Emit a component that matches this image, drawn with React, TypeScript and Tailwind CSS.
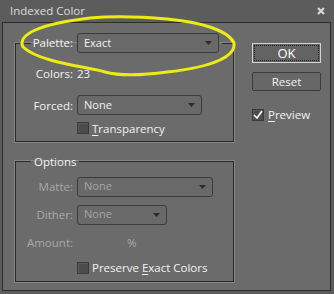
import React from 'react';

const font = "font-['Open_Sans','Noto_Sans',sans-serif]";

function Arrow() {
  return (
    <svg width="7" height="4" viewBox="0 0 7 4">
      <polygon points="0,0 7,0 3.5,4" fill="#2c2c2c" />
    </svg>
  );
}

function Select({ value, width, disabled }: { value: React.ReactNode; width: string; disabled?: boolean }) {
  return (
    <div
      className={`flex h-[20px] items-center justify-between rounded-[3px] border border-[#3b3b3b] bg-[#696969] pl-[6px] pr-[6px] text-[11px] ${width} ${
        disabled ? 'text-[#a6a6a6]' : 'text-[#f2f2f2]'
      }`}
    >
      <span>{value}</span>
      <Arrow />
    </div>
  );
}

function Checkbox({ checked }: { checked?: boolean }) {
  return (
    <div className="flex h-[12px] w-[12px] items-center justify-center border border-[#3a3a3a] bg-[#4c4c4c] shadow-[inset_1px_1px_0_#5a5a5a]">
      {checked && (
        <svg width="10" height="9" viewBox="0 0 10 9">
          <path d="M1 5 L4 8 L9 1" fill="none" stroke="#ffffff" strokeWidth="1.6" />
        </svg>
      )}
    </div>
  );
}

export default function App() {
  return (
    <div className={`relative flex h-[294px] w-[334px] flex-col bg-[#5c5c5c] ${font}`}>
      {/* title bar */}
      <div className="flex h-[22px] shrink-0 items-center justify-between pl-[10px] pr-[9px]">
        <span className="text-[11.5px] text-[#dcdcdc]">Indexed Color</span>
        <svg width="8" height="8" viewBox="0 0 8 8">
          <path d="M1 1 L7 7 M7 1 L1 7" stroke="#d6d6d6" strokeWidth="2.2" />
        </svg>
      </div>

      {/* body */}
      <div className="mb-[3px] ml-[2px] mr-[3px] flex flex-1 border border-[#2c2c2c] bg-[#6b6b6b] pl-[12px] pt-[10px]">
        {/* left column */}
        <div className="flex w-[219px] flex-col">
          <fieldset className="border border-[#2a2a2a] pb-[5px] shadow-[0_0_0_1px_#858585]">
            <legend className="ml-[15px] flex items-center pr-[3px]">
              <span className="w-[42px] text-right text-[11.5px] text-[#f2f2f2]">Palette:</span>
              <div className="ml-[4px]">
                <Select value="Exact" width="w-[142px]" />
              </div>
            </legend>
            <div className="grid grid-cols-[57px_1fr] items-center gap-x-[4px] text-[11.5px] text-[#f2f2f2]">
              <span className="mt-[12px] text-right">Colors:</span>
              <span className="mt-[12px]">23</span>
              <span className="mt-[13px] text-right">Forced:</span>
              <div className="mt-[13px]">
                <Select value="None" width="w-[125px]" />
              </div>
              <span />
              <div className="mt-[5px] flex h-[16px] items-center gap-[3px]">
                <Checkbox />
                <span>
                  <u className="underline-offset-2">T</u>ransparency
                </span>
              </div>
            </div>
          </fieldset>

          <fieldset className="mt-[11px] border border-[#2a2a2a] pb-[5px] shadow-[0_0_0_1px_#858585]">
            <legend className="ml-[15px] px-[3px] text-[11.5px] text-[#f2f2f2]">Options</legend>
            <div className="grid grid-cols-[57px_1fr] items-center gap-x-[4px] text-[11.5px] text-[#a9a9a9]">
              <span className="mt-[6px] text-right">Matte:</span>
              <div className="mt-[6px]">
                <Select value="None" width="w-[136px]" disabled />
              </div>
              <span className="mt-[8px] text-right">Dither:</span>
              <div className="mt-[8px]">
                <Select value="None" width="w-[90px]" disabled />
              </div>
              <span className="mt-[9px] h-[16px] text-right">Amount:</span>
              <span className="mt-[9px] h-[16px] pl-[50px]">%</span>
              <span />
              <div className="mt-[10px] flex h-[16px] items-center gap-[3px] text-[#f2f2f2]">
                <Checkbox />
                <span>
                  Preserve <u className="underline-offset-2">E</u>xact Colors
                </span>
              </div>
            </div>
          </fieldset>
        </div>

        {/* right column */}
        <div className="ml-[18px] flex w-[69px] flex-col pt-[10px]">
          <button className="flex h-[20px] w-[69px] items-stretch border border-[#d4d4d4] bg-[#636363] p-0">
            <span className="m-px flex flex-1 items-center justify-center border border-dotted border-[#262626] text-[13px] leading-none text-white">
              OK
            </span>
          </button>
          <button className="mt-[9px] flex h-[19px] w-[69px] items-center justify-center rounded-[2px] border border-[#3c3c3c] bg-[#676767] text-[11.5px] text-[#f2f2f2]">
            Reset
          </button>
          <div className="mt-[15px] flex items-center gap-[4px] text-[11.5px] text-[#f2f2f2]">
            <Checkbox checked />
            <span>
              <u className="underline-offset-2">P</u>review
            </span>
          </div>
        </div>
      </div>

      {/* yellow annotation */}
      <svg className="pointer-events-none absolute left-0 top-0" width="334" height="294" viewBox="0 0 334 294">
        <path
          d="M167 19 C200 22, 228 30, 234 43 C236 56, 214 67, 167 72 C145 75, 120 76, 105 72 C90 67, 40 63, 23 47 C17 35, 38 24, 90 18 C120 15, 145 17, 167 19 Z"
          fill="none"
          stroke="#ecec14"
          strokeWidth="3"
          strokeLinecap="round"
        />
      </svg>
    </div>
  );
}
